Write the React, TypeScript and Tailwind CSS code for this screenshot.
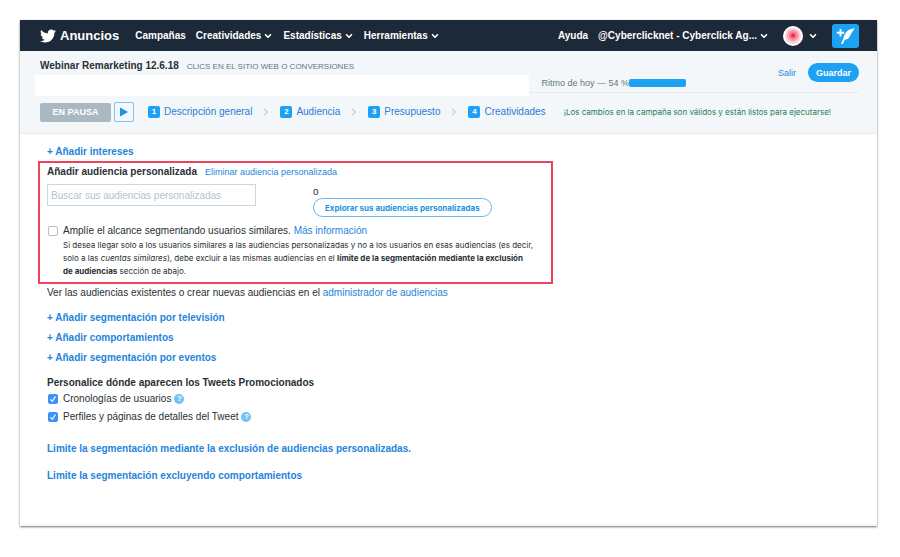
import { Fragment, type ReactNode } from "react";
import { ChevronDown, ChevronRight } from "lucide-react";
import { FaTwitter } from "react-icons/fa";

const steps = ["Descripción general", "Audiencia", "Presupuesto", "Creatividades"];

function Caret() {
  return <ChevronDown className="size-[10px] shrink-0" strokeWidth={4} aria-hidden />;
}

function NavButton({ children }: { children: ReactNode }) {
  return (
    <button type="button" className="flex items-center gap-[2px] whitespace-nowrap">
      {children}
      <Caret />
    </button>
  );
}

function ComposeIcon() {
  return (
    <svg viewBox="0 0 27 24" className="h-6 w-[27px]" aria-hidden>
      <path d="M8.500 5v7.400M4.800 8.700h7.400" stroke="#fff" strokeWidth="1.900" fill="none" />
      <path
        d="M22.800 4.300c-3.800.3-7 1.900-8.800 4.200-1.700 2.200-2.300 4.400-3 6.700-.5 1.700-1.200 3.100-2 4.500l1.600.2c.9-1.400 1.600-2.700 2.200-4.200 2.500-.2 4.200-1.400 5.100-3.300l-.9-.1c1-.4 1.700-1 2.100-1.900l-.8-.1c1.900-1.400 2.600-3.600 4.500-6z"
        fill="#fff"
      />
    </svg>
  );
}

function Avatar() {
  return (
    <svg viewBox="0 0 20 20" className="size-5" role="img" aria-label="Cyberclick">
      <circle cx="10" cy="10" r="10" fill="#fff" />
      <circle cx="10" cy="10" r="8" fill="#fbd3db" />
      <circle cx="10" cy="9.500" r="6" fill="#f8a3b4" />
      <circle cx="10" cy="9.500" r="4" fill="#f67a92" />
      <circle cx="10" cy="9.500" r="2" fill="#f0284f" />
    </svg>
  );
}

function Tick({ id, checked = false }: { id: string; checked?: boolean }) {
  return (
    <span className="grid size-[10px] shrink-0 place-items-center">
      <input
        id={id}
        type="checkbox"
        defaultChecked={checked}
        className="peer col-start-1 row-start-1 size-[10px] appearance-none rounded-[2px] border border-[#bcbcbc] bg-white checked:border-[#3b93f7] checked:bg-[#3b93f7]"
      />
      <svg
        viewBox="0 0 10 10"
        className="pointer-events-none invisible col-start-1 row-start-1 size-[10px] peer-checked:visible"
        aria-hidden
      >
        <path d="M2.500 5.300 4.300 7.300 7.500 2.500" stroke="#fff" strokeWidth="1.200" fill="none" />
      </svg>
    </span>
  );
}

function Help() {
  return (
    <button
      type="button"
      aria-label="Ayuda"
      className="size-[10px] rounded-full bg-[#6fc3f5] text-center text-[8px] leading-[10px] font-bold text-white"
    >
      ?
    </button>
  );
}

function Link({ children, className = "" }: { children: ReactNode; className?: string }) {
  return (
    <a href="#" className={`text-[#2384dc] ${className}`}>
      {children}
    </a>
  );
}

export default function App() {
  return (
    <div className="bg-white pt-5 pr-[23px] pb-[30px] pl-5 font-['Liberation_Sans',Arial,sans-serif] text-[10px] leading-4 text-[#292f33]">
      <div className="border-b-2 border-[#f3f7fa] shadow-[0_1px_2px_rgba(0,0,0,0.55)]">
        <header className="flex h-[31px] items-center bg-[#1c2938] pr-[18px] pl-5 font-bold text-white">
          <a href="#" className="mr-4 flex items-center gap-1 text-[13px]">
            <FaTwitter className="size-4" aria-hidden />
            Anuncios
          </a>
          <nav className="flex items-center gap-[10px]">
            <a href="#">Campañas</a>
            <NavButton>Creatividades</NavButton>
            <NavButton>Estadísticas</NavButton>
            <NavButton>Herramientas</NavButton>
          </nav>
          <div className="ml-auto flex items-center gap-[14px]">
            <div className="flex items-center gap-[10px]">
              <a href="#">Ayuda</a>
              <NavButton>@Cyberclicknet - Cyberclick Ag...</NavButton>
            </div>
            <button type="button" className="flex items-center gap-[5px]" aria-label="Cuenta">
              <Avatar />
              <Caret />
            </button>
            <button type="button" aria-label="Redactar Tweet" className="rounded-[3px] bg-[#1da1f2]">
              <ComposeIcon />
            </button>
          </div>
        </header>

        <section className="border-b border-[#e6ecf0] bg-[#f3f7fa] pr-[18px] pb-[11px] pl-[15px]">
          <div className="flex">
            <div className="w-3/5">
              <div className="flex items-baseline gap-2 pt-[7px] pl-[5px]">
                <h1 className="font-bold">Webinar Remarketing 12.6.18</h1>
                <p className="text-[8px] text-[#66757f]">CLICS EN EL SITIO WEB O CONVERSIONES</p>
              </div>
              <div className="h-[21px] bg-white" />
            </div>
            <div className="mb-[3px] flex w-2/5 justify-between border-b border-[#e6ecf0] pl-3">
              <div className="flex items-center self-end pb-[1px] text-[9px] text-[#66757f]">
                <span id="ritmo">Ritmo de hoy — 54 %</span>
                <div
                  role="meter"
                  aria-labelledby="ritmo"
                  aria-valuenow={54}
                  className="h-2 w-[57px] rounded-[2px] bg-[#1da1f2]"
                />
              </div>
              <div className="flex items-center gap-3 self-start pt-3 text-[9px]">
                <Link>Salir</Link>
                <button type="button" className="h-[19px] rounded-full bg-[#1da1f2] px-2 font-bold text-white">
                  Guardar
                </button>
              </div>
            </div>
          </div>
          <div className="flex items-center pt-[6px] pl-[5px]">
            <span className="h-[19px] w-[71px] rounded-[2px] bg-[#aab8c2] text-center text-[9px] leading-[19px] font-bold text-white">
              EN PAUSA
            </span>
            <button
              type="button"
              aria-label="Reanudar"
              className="mr-[14px] ml-[3px] grid size-5 place-items-center rounded-[2px] border border-[#7cc4f5]"
            >
              <svg viewBox="0 0 8 10" className="h-[10px] w-2" aria-hidden>
                <path d="M0 .5 8 5 0 9.500z" fill="#1c94e0" />
              </svg>
            </button>
            <ol className="flex items-center gap-[9px]">
              {steps.map((step, i) => (
                <Fragment key={step}>
                  {i > 0 && (
                    <li aria-hidden>
                      <ChevronRight className="h-3 w-[10px] text-[#ccd6dd]" strokeWidth={4} />
                    </li>
                  )}
                  <li>
                    <a href="#" className="flex items-center gap-1 whitespace-nowrap text-[#2b7bd6]">
                      <span className="size-3 rounded-[2px] bg-[#1da1f2] text-center text-[8px] leading-3 font-bold text-white">
                        {i + 1}
                      </span>
                      {step}
                    </a>
                  </li>
                </Fragment>
              ))}
            </ol>
            <p className="ml-[18px] font-[Inter,sans-serif] text-[8px] whitespace-nowrap text-[#24804f]">
              ¡Los cambios en la campaña son válidos y están listos para ejecutarse!
            </p>
          </div>
        </section>

        <main className="px-[18px] pt-[10px] pb-10">
          <div className="px-[9px]">
            <Link className="font-bold">+ Añadir intereses</Link>
          </div>

          <section className="mt-[1px] max-w-[515px] border-2 border-[#f0415f] pt-[1px] pr-[2px] pb-1 pl-[7px]">
            <div className="flex items-baseline gap-2">
              <h2 className="font-bold">Añadir audiencia personalizada</h2>
              <Link className="text-[9px]">Eliminar audiencia personalizada</Link>
            </div>
            <div className="flex gap-[57px] pt-1">
              <input
                type="text"
                aria-label="Buscar sus audiencias personalizadas"
                placeholder="Buscar sus audiencias personalizadas"
                className="h-[22px] w-[209px] border border-[#ccd6dd] px-[3px] placeholder:text-[#b4c1cb]"
              />
              <div>
                <p className="pt-[2px] leading-3">o</p>
                <button
                  type="button"
                  className="h-[19px] rounded-full border border-[#5fb9f3] px-[11px] font-[Inter,sans-serif] text-[8px] font-bold text-[#1c94e0]"
                >
                  Explorar sus audiencias personalizadas
                </button>
              </div>
            </div>
            <div className="flex items-center gap-[5px] pt-[6px] pl-[1px]">
              <Tick id="similares" />
              <p>
                <label htmlFor="similares">Amplíe el alcance segmentando usuarios similares.</label>{" "}
                <Link>Más información</Link>
              </p>
            </div>
            <p className="pl-4 font-[Inter,sans-serif] text-[8px] leading-[13px]">
              Si desea llegar solo a los usuarios similares a las audiencias personalizadas y no a los usuarios en
              esas audiencias (es decir, solo a las <em>cuentas similares</em>), debe excluir a las mismas audiencias
              en el <strong>límite de la segmentación mediante la exclusión de&nbsp;audiencias</strong> sección de
              abajo.
            </p>
          </section>

          <div className="px-[9px] pt-[1px]">
            <p>
              Ver las audiencias existentes o crear nuevas audiencias en el <Link>administrador de audiencias</Link>
            </p>
            <div className="flex flex-col items-start gap-1 pt-[9px] font-bold">
              <Link>+ Añadir segmentación por televisión</Link>
              <Link>+ Añadir comportamientos</Link>
              <Link>+ Añadir segmentación por eventos</Link>
            </div>
            <h2 className="pt-[9px] font-bold">Personalice dónde aparecen los Tweets Promocionados</h2>
            <div className="flex items-center gap-[3px] pl-[1px]">
              <Tick id="cronologias" checked />
              <label htmlFor="cronologias" className="pl-[2px]">
                Cronologías de usuarios
              </label>
              <Help />
            </div>
            <div className="flex items-center gap-[3px] pt-[2px] pl-[1px]">
              <Tick id="perfiles" checked />
              <label htmlFor="perfiles" className="pl-[2px]">
                Perfiles y páginas de detalles del Tweet
              </label>
              <Help />
            </div>
            <div className="flex flex-col items-start gap-[11px] pt-4 font-bold">
              <Link>Limite la segmentación mediante la exclusión de audiencias personalizadas.</Link>
              <Link>Limite la segmentación excluyendo comportamientos</Link>
            </div>
          </div>
        </main>
      </div>
    </div>
  );
}
